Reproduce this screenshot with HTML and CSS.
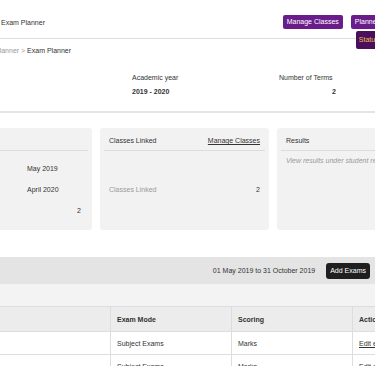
FILE: index.html
```html
<!DOCTYPE html>
<html>
<head>
<title>Exam Planner</title>
<link rel="stylesheet" href="styles.css">
</head>
<body>

<div class="page">
	<div class="topbar">
		<span class="title">Exam Planner</span>
		<div class="actions">
			<button type="button" class="btn purple">Manage Classes</button>
			<div class="menu">
				<button type="button" class="btn purple">Planner</button>
				<button type="button" class="btn status">Status</button>
			</div>
		</div>
	</div>

	<div class="crumbs"><span class="muted">Planner &gt;</span> Exam Planner</div>

	<div class="summary">
		<div class="sum-item year">
			<span>Academic year</span>
			<span class="value">2019 - 2020</span>
		</div>
		<div class="sum-item terms">
			<span>Number of Terms</span>
			<span class="value rightp">2</span>
		</div>
	</div>

	<div class="cards">
		<div class="card first">
			<div class="card-head"><span>Term</span></div>
			<div class="term-grid">
				<span>Start</span><span>May 2019</span>
				<span>End</span><span>April 2020</span>
				<span>Terms</span><span class="rightp">2</span>
			</div>
		</div>
		<div class="card second">
			<div class="card-head"><span>Classes Linked</span><a href="#" class="link">Manage Classes</a></div>
			<div class="linked">
				<span class="muted">Classes Linked</span>
				<span>2</span>
			</div>
		</div>
		<div class="card third">
			<div class="card-head"><span>Results</span></div>
			<div class="note">View results under student records</div>
		</div>
	</div>

	<div class="bar">
		<span>01 May 2019 to 31 October 2019</span>
		<button type="button" class="btn black">Add Exams</button>
	</div>
	<div class="band"></div>

	<table class="exams">
		<tr>
			<th class="c1">Exam</th>
			<th class="c2">Exam Mode</th>
			<th class="c3">Scoring</th>
			<th class="c4">Actions</th>
		</tr>
		<tr>
			<td>Term 1</td>
			<td>Subject Exams</td>
			<td>Marks</td>
			<td><a href="#" class="link">Edit exam</a></td>
		</tr>
		<tr>
			<td>Term 2</td>
			<td>Subject Exams</td>
			<td>Marks</td>
			<td><a href="#" class="link">Edit exam</a></td>
		</tr>
	</table>
</div>

</body>
</html>
```

FILE: styles.css
```css
body {
  margin: 0;
  font-family: "Liberation Sans", Arial, sans-serif;
  font-size: 7px;
  color: #333;
  background-color: white;
  overflow: hidden;
}

.page {
  width: 400px;
}

.rightp {
  text-align: right;
}

.muted {
  color: #999;
}

.link {
  color: #333;
  text-decoration: underline;
}

/* top bar */

.topbar {
  display: flex;
  align-items: center;
  padding: 15px 17px 9px 1px;
  border-bottom: 1px solid #dedede;
}

.title {
  flex: 1;
}

.actions {
  display: flex;
  gap: 8px;
}

.menu {
  position: relative;
}

.btn {
  font-family: inherit;
  font-size: 7px;
  height: 14px;
  line-height: 14px;
  padding: 0 4px;
  border: 0;
  border-radius: 2px;
  color: white;
  white-space: nowrap;
}

.purple {
  background-color: #6b1c8b;
}

.status {
  position: absolute;
  top: 16px;
  left: 5px;
  height: 18px;
  padding: 0 3px;
  background-color: #4a0e5b;
  color: #f0bf4c;
}

.black {
  height: 16px;
  border-radius: 3px;
  background-color: #1f1f1f;
}

/* breadcrumbs and summary */

.crumbs {
  padding-top: 7px;
  margin-left: -5px;
  line-height: 9px;
}

.summary {
  display: flex;
  padding: 18px 0 15px 132px;
  border-bottom: 2px solid #e4e4e4;
  line-height: 9px;
}

.sum-item {
  display: flex;
  flex-direction: column;
  gap: 5px;
}

.year {
  width: 147px;
}

.terms {
  width: 57px;
}

.value {
  font-weight: bold;
}

/* cards */

.cards {
  display: flex;
  gap: 8px;
  margin: 15px 0 0 -38px;
  line-height: 9px;
}

.card {
  flex: none;
  height: 102px;
  background-color: #f2f2f2;
  border-radius: 3px;
}

.first {
  width: 130px;
}

.second {
  width: 169px;
}

.third {
  width: 168px;
}

.card-head {
  display: flex;
  justify-content: space-between;
  margin: 0 4px;
  padding: 8px 5px 5px;
  border-bottom: 1px solid #dcdcdc;
}

.term-grid {
  display: grid;
  grid-template-columns: 61px 1fr;
  row-gap: 12px;
  margin: 0 4px;
  padding: 13px 7px 0 0;
}

.linked {
  display: flex;
  justify-content: space-between;
  margin: 0 4px;
  padding: 34px 5px 0;
}

.note {
  margin: 0 4px;
  padding: 5px 5px 0;
  color: #999;
  font-style: italic;
  white-space: nowrap;
}

/* exams */

.bar {
  display: flex;
  justify-content: flex-end;
  align-items: center;
  gap: 11px;
  height: 27px;
  margin-top: 27px;
  padding-right: 30px;
  background-color: #e4e4e4;
}

.band {
  height: 22px;
  background-color: #f3f3f3;
}

.exams {
  border-collapse: collapse;
  margin-left: -40px;
  table-layout: fixed;
  width: 460px;
}

.exams th,
.exams td {
  text-align: left;
  padding: 0 6px;
  border: 1px solid #dddddd;
  white-space: nowrap;
  overflow: hidden;
}

.exams th {
  height: 24px;
  background-color: #ececec;
  font-weight: bold;
}

.exams td {
  height: 22px;
}

.c1 {
  width: 137px;
}

.c2,
.c3 {
  width: 108px;
}

.c4 {
  width: 59px;
}
```
